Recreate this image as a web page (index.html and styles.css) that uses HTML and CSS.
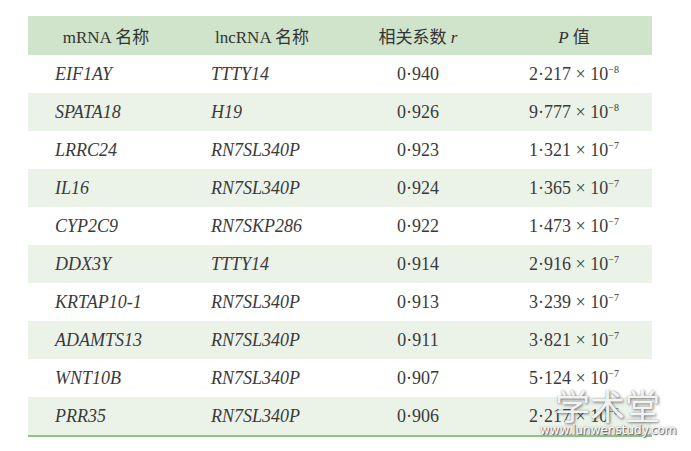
FILE: index.html
```html
<!DOCTYPE html>
<html lang="zh">
<head>
<meta charset="utf-8">
<link rel="stylesheet" href="styles.css">
</head>
<body>
<div class="page">
  <table class="data">
    <thead>
      <tr><th>mRNA 名称</th><th>lncRNA 名称</th><th>相关系数 <i>r</i></th><th><i>P</i> 值</th></tr>
    </thead>
    <tbody>
      <tr><td class="gene">EIF1AY</td><td class="gene">TTTY14</td><td class="num">0·940</td><td class="num">2·217 × 10<sup>−8</sup></td></tr>
      <tr><td class="gene">SPATA18</td><td class="gene">H19</td><td class="num">0·926</td><td class="num">9·777 × 10<sup>−8</sup></td></tr>
      <tr><td class="gene">LRRC24</td><td class="gene">RN7SL340P</td><td class="num">0·923</td><td class="num">1·321 × 10<sup>−7</sup></td></tr>
      <tr><td class="gene">IL16</td><td class="gene">RN7SL340P</td><td class="num">0·924</td><td class="num">1·365 × 10<sup>−7</sup></td></tr>
      <tr><td class="gene">CYP2C9</td><td class="gene">RN7SKP286</td><td class="num">0·922</td><td class="num">1·473 × 10<sup>−7</sup></td></tr>
      <tr><td class="gene">DDX3Y</td><td class="gene">TTTY14</td><td class="num">0·914</td><td class="num">2·916 × 10<sup>−7</sup></td></tr>
      <tr><td class="gene">KRTAP10-1</td><td class="gene">RN7SL340P</td><td class="num">0·913</td><td class="num">3·239 × 10<sup>−7</sup></td></tr>
      <tr><td class="gene">ADAMTS13</td><td class="gene">RN7SL340P</td><td class="num">0·911</td><td class="num">3·821 × 10<sup>−7</sup></td></tr>
      <tr><td class="gene">WNT10B</td><td class="gene">RN7SL340P</td><td class="num">0·907</td><td class="num">5·124 × 10<sup>−7</sup></td></tr>
      <tr><td class="gene">PRR35</td><td class="gene">RN7SL340P</td><td class="num">0·906</td><td class="num">2·217 × 10<sup>−6</sup></td></tr>
    </tbody>
  </table>
  <div class="watermark">
    <div class="wm-big">学术堂</div>
    <div class="wm-small">www.lunwenstudy.com</div>
  </div>
</div>
</body>
</html>
```

FILE: styles.css
```css
html, body {
  margin: 0;
  padding: 0;
  background: #ffffff;
}
.page {
  position: relative;
  width: 691px;
  height: 451px;
  padding: 16px 0 0 28px;
  box-sizing: border-box;
}
.data {
  width: 624px;
  border-collapse: collapse;
  table-layout: fixed;
  font-family: "Liberation Serif", serif;
  font-size: 18px;
  color: #3a3a3a;
  border-bottom: 2px solid #8cc581;
}
.data th {
  height: 39px;
  padding: 0;
  background: #d0e4cc;
  font-weight: normal;
  text-align: center;
  color: #333333;
  font-size: 17px;
  font-family: "Liberation Serif", "Noto Sans CJK SC", serif;
}
.data td {
  height: 38px;
  padding: 0;
  font-family: "Liberation Serif", "Times New Roman", serif;
  font-size: 18px;
}
.data tbody tr:nth-child(even) td {
  background: #ebf3e9;
}
.data td.gene {
  font-style: italic;
  padding-left: 27px;
  text-align: left;
}
.data td.num {
  text-align: center;
}
.num sup {
  font-family: "Liberation Serif", serif;
  font-size: 10px;
  vertical-align: 7px;
  line-height: 0;
}
.watermark {
  position: absolute;
  left: 538px;
  top: 383px;
  width: 140px;
  pointer-events: none;
}
.wm-big {
  font-family: "Noto Sans CJK SC", sans-serif;
  font-size: 35px;
  line-height: 44px;
  padding-left: 17px;
  color: rgba(255, 255, 255, 0.93);
  text-shadow: 1px 1px 3px rgba(80, 80, 80, 0.8), 0 0 1px rgba(120, 120, 120, 0.6);
}
.wm-small {
  font-family: "DejaVu Sans", sans-serif;
  font-size: 12px;
  line-height: 13px;
  padding-left: 2px;
  color: #ffffff;
  text-shadow: 1px 1px 1px #555, 0 0 2px #888;
  margin-top: -3px;
}
```
